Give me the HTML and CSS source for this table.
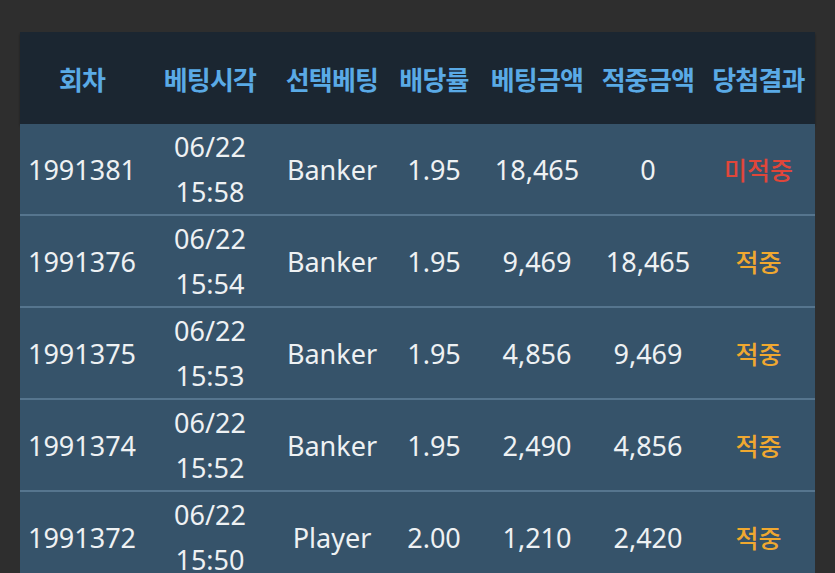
FILE: index.html
```html
<!DOCTYPE html>
<html lang="ko">
<head>
<meta charset="utf-8">
<link rel="stylesheet" href="styles.css">
</head>
<body>
<div class="wrap">
<table class="bets">
  <colgroup>
    <col class="c1"><col class="c2"><col class="c3"><col class="c4"><col class="c5"><col class="c6"><col class="c7">
  </colgroup>
  <thead>
    <tr><th>회차</th><th>베팅시각</th><th>선택베팅</th><th>배당률</th><th>베팅금액</th><th>적중금액</th><th>당첨결과</th></tr>
  </thead>
  <tbody>
    <tr><td>1991381</td><td>06/22<br>15:58</td><td>Banker</td><td>1.95</td><td>18,465</td><td>0</td><td class="lose">미적중</td></tr>
    <tr><td>1991376</td><td>06/22<br>15:54</td><td>Banker</td><td>1.95</td><td>9,469</td><td>18,465</td><td class="win">적중</td></tr>
    <tr><td>1991375</td><td>06/22<br>15:53</td><td>Banker</td><td>1.95</td><td>4,856</td><td>9,469</td><td class="win">적중</td></tr>
    <tr><td>1991374</td><td>06/22<br>15:52</td><td>Banker</td><td>1.95</td><td>2,490</td><td>4,856</td><td class="win">적중</td></tr>
    <tr><td>1991372</td><td>06/22<br>15:50</td><td>Player</td><td>2.00</td><td>1,210</td><td>2,420</td><td class="win">적중</td></tr>
  </tbody>
</table>
</div>
</body>
</html>
```

FILE: styles.css
```css
html, body {
  margin: 0;
  padding: 0;
  background: #2e2e2e;
  height: 100%;
  overflow: hidden;
}
.wrap {
  padding: 32px 20px 0 20px;
}
.bets {
  width: 795px;
  border-collapse: collapse;
  table-layout: fixed;
  font-family: "Noto Sans", "Noto Sans CJK KR", sans-serif;
}
.c1 { width: 124px; }
.c2 { width: 132px; }
.c3 { width: 112px; }
.c4 { width: 92px; }
.c5 { width: 114px; }
.c6 { width: 108px; }
.c7 { width: 113px; }
.bets thead tr {
  background: #1b2631;
  box-shadow: 0 2px 2px rgba(0,0,0,0.35);
}
.bets th {
  height: 92px;
  padding: 0;
  font-family: "Noto Sans CJK KR", sans-serif;
  font-weight: 700;
  font-size: 26px;
  letter-spacing: -0.8px;
  color: #5aaae6;
  text-align: center;
  vertical-align: middle;
  white-space: nowrap;
}
.bets tbody tr {
  background: #36536a;
  border-top: 2px solid #56758e;
}
.bets tbody tr:first-child {
  border-top: none;
}
.bets td {
  height: 90px;
  padding: 0;
  font-size: 27px;
  line-height: 45px;
  color: #eef1f3;
  text-align: center;
  vertical-align: middle;
  white-space: nowrap;
}
.bets td.lose {
  color: #e0463a;
  font-family: "Noto Sans CJK KR", sans-serif;
  font-weight: 500;
  font-size: 25px;
}
.bets td.win {
  color: #f0a830;
  font-family: "Noto Sans CJK KR", sans-serif;
  font-weight: 500;
  font-size: 25px;
}
```
